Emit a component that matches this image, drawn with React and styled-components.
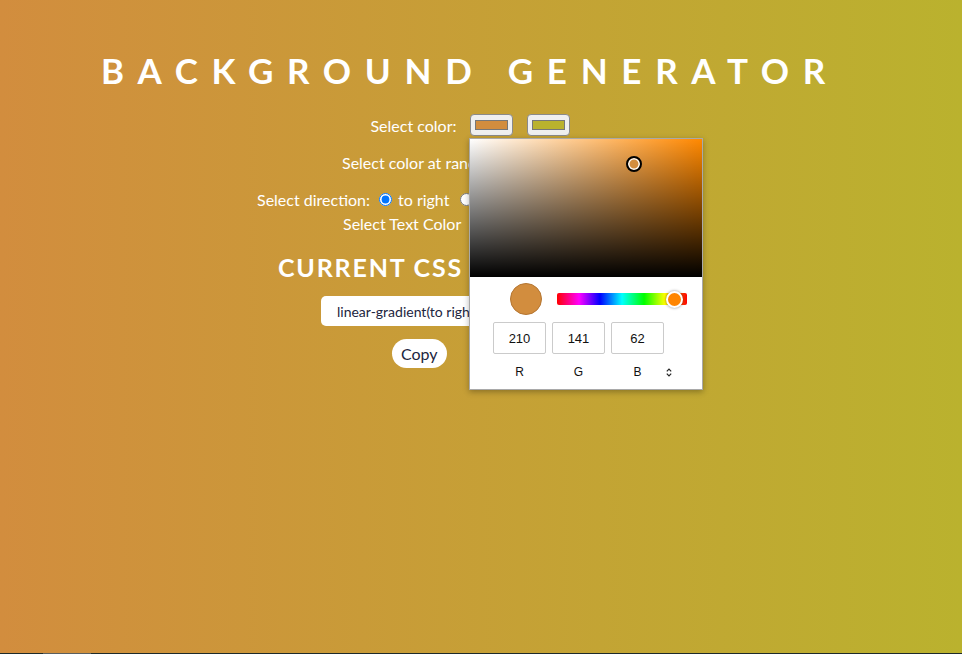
import React, { useState } from "react";
import styled, { createGlobalStyle } from "styled-components";

const GlobalStyle = createGlobalStyle`
  html, body {
    margin: 0;
    padding: 0;
    background: #1d2a2a;
  }
  body {
    font-family: "Lato", "Noto Sans", sans-serif;
  }
`;

const COLOR_ONE = "#d28d3e";
const COLOR_TWO = "#bab22e";

export default function App() {
  const [direction, setDirection] = useState("to right");
  const css = `linear-gradient(${direction}, rgb(210, 141, 62), rgb(186, 178, 46))`;

  return (
    <>
      <GlobalStyle />
      <Page $from={COLOR_ONE} $to={COLOR_TWO}>
        <Content>
          <Title>BACKGROUND GENERATOR</Title>

          <Row $top={23}>
            <Label>Select color:</Label>
            <Swatch $color={COLOR_ONE} />
            <Swatch $color={COLOR_TWO} />
          </Row>

          <Row $top={15} $width={256}>
            <Label>Select color at random:</Label>
            <SmallButton>Random</SmallButton>
          </Row>

          <Row $top={15} $width={426}>
            <Label>Select direction:</Label>
            {["to right", "to left", "to bottom", "to top"].map((d) => (
              <RadioLabel key={d}>
                <input
                  type="radio"
                  name="direction"
                  checked={direction === d}
                  onChange={() => setDirection(d)}
                />
                {d}
              </RadioLabel>
            ))}
          </Row>

          <Row $top={2} $width={254}>
            <Label>Select Text Color</Label>
            <Swatch $color="#ffffff" />
          </Row>

          <Heading>CURRENT CSS CODE</Heading>
          <CssBox readOnly value={css} />

          <Buttons>
            <PillButton>Copy</PillButton>
            <PillButton>Reset all</PillButton>
          </Buttons>
        </Content>

        <Picker>
          <Saturation $hue={32}>
            <SatHandle style={{ left: "70.5%", top: "18%" }} />
          </Saturation>
          <PickerBody>
            <PreviewRow>
              <Preview $color={COLOR_ONE} />
              <HueBar>
                <HueThumb style={{ left: "90.5%" }} />
              </HueBar>
            </PreviewRow>
            <Channels>
              <ChannelInput value="210" readOnly />
              <ChannelInput value="141" readOnly />
              <ChannelInput value="62" readOnly />
              <Spacer />
              <ChannelName>R</ChannelName>
              <ChannelName>G</ChannelName>
              <ChannelName>B</ChannelName>
              <ModeToggle>
                <svg width="6" height="9" viewBox="0 0 6 9">
                  <path d="M0.8 3.4 L3 1.2 L5.2 3.4 M0.8 5.6 L3 7.8 L5.2 5.6" fill="none" stroke="#222" strokeWidth="1.2" />
                </svg>
              </ModeToggle>
            </Channels>
          </PickerBody>
        </Picker>
      </Page>
      <ScrollTrack>
        <ScrollThumb />
      </ScrollTrack>
    </>
  );
}

const Page = styled.div`
  position: relative;
  height: 653px;
  background: linear-gradient(to right, ${(p) => p.$from}, ${(p) => p.$to});
  overflow: hidden;
`;

const Content = styled.div`
  width: 940px;
  padding-top: 49px;
  display: flex;
  flex-direction: column;
  align-items: center;
  color: #fff;
`;

const Title = styled.h1`
  margin: 0;
  font-size: 35px;
  line-height: 42px;
  font-weight: 700;
  letter-spacing: 13.7px;
  white-space: nowrap;
`;

const Row = styled.div`
  margin-top: ${(p) => p.$top}px;
  width: ${(p) => (p.$width ? `${p.$width}px` : "auto")};
  height: 22px;
  display: flex;
  align-items: center;
  gap: 13px;
  font-size: 16px;
`;

const Label = styled.span`
  white-space: nowrap;
`;

const Swatch = styled.span`
  box-sizing: border-box;
  flex: none;
  width: 43px;
  height: 22px;
  padding: 5px 4px;
  background: #efefef;
  border: 1px solid #8a8a8a;
  border-radius: 4px;
  display: flex;
  & + & {
    margin-left: 1px;
  }
  &::after {
    content: "";
    flex: 1;
    background: ${(p) => p.$color};
    border: 1px solid #777;
  }
`;

const SmallButton = styled.button`
  font-family: "Lato", sans-serif;
  font-size: 14px;
  padding: 2px 10px;
  border: none;
  border-radius: 10px;
  background: #fff;
`;

const RadioLabel = styled.label`
  display: flex;
  align-items: center;
  gap: 4px;
  margin-left: -4px;
  margin-right: 2px;
  white-space: nowrap;
  input {
    margin: 0 2px 0 0;
    width: 13px;
    height: 13px;
  }
`;

const Heading = styled.h2`
  margin: 18px 0 0;
  width: 384px;
  font-size: 25px;
  line-height: 30px;
  font-weight: 700;
  letter-spacing: 1.8px;
  white-space: nowrap;
`;

const CssBox = styled.input`
  box-sizing: border-box;
  margin-top: 14px;
  width: 298px;
  height: 30px;
  padding: 0 16px;
  border: none;
  border-radius: 5px;
  background: #fff;
  color: #1c2540;
  font-family: "Lato", sans-serif;
  font-size: 14px;
  outline: none;
`;

const Buttons = styled.div`
  margin-top: 13px;
  width: 156px;
  display: flex;
  gap: 22px;
`;

const PillButton = styled.button`
  flex: none;
  height: 29px;
  padding: 0 9px;
  border: none;
  border-radius: 15px;
  background: #fff;
  color: #1c2540;
  font-family: "Lato", sans-serif;
  font-size: 16px;
`;

const Picker = styled.div`
  position: absolute;
  left: 469px;
  top: 138px;
  box-sizing: border-box;
  width: 234px;
  height: 252px;
  background: #fff;
  border: 1px solid #a9a9a9;
  box-shadow: 0 2px 6px rgba(0, 0, 0, 0.3);
  display: flex;
  flex-direction: column;
  font-family: "Liberation Sans", Arial, sans-serif;
`;

const Saturation = styled.div`
  position: relative;
  height: 138px;
  background: linear-gradient(to top, #000, rgba(0, 0, 0, 0)),
    linear-gradient(to right, #fff, hsl(${(p) => p.$hue}, 100%, 50%));
`;

const SatHandle = styled.span`
  position: absolute;
  box-sizing: border-box;
  width: 16px;
  height: 16px;
  margin: -8px 0 0 -8px;
  border-radius: 50%;
  border: 2.5px solid #000;
  box-shadow: inset 0 0 0 1.5px #fff;
  background: ${COLOR_ONE};
`;

const PickerBody = styled.div`
  padding: 6px 0 0 23px;
`;

const PreviewRow = styled.div`
  display: flex;
  align-items: center;
  gap: 14px;
  padding-left: 17px;
`;

const Preview = styled.span`
  box-sizing: border-box;
  width: 32px;
  height: 32px;
  border-radius: 50%;
  background: ${(p) => p.$color};
  border: 1px solid #b57632;
`;

const HueBar = styled.div`
  position: relative;
  width: 130px;
  height: 12px;
  margin-left: 1px;
  border-radius: 2px;
  background: linear-gradient(
    to right,
    #f00 0%,
    #f0f 17%,
    #00f 33%,
    #0ff 50%,
    #0f0 67%,
    #ff0 83%,
    #f00 100%
  );
`;

const HueThumb = styled.span`
  position: absolute;
  top: 50%;
  box-sizing: border-box;
  width: 17px;
  height: 17px;
  margin: -8.5px 0 0 -8.5px;
  border-radius: 50%;
  background: #ff8500;
  border: 2px solid #fff;
  box-shadow: 0 0 3px rgba(0, 0, 0, 0.45);
`;

const Channels = styled.div`
  margin-top: 7px;
  display: grid;
  grid-template-columns: 53px 53px 53px 8px;
  column-gap: 6px;
  row-gap: 11px;
  align-items: center;
`;

const ChannelInput = styled.input`
  box-sizing: border-box;
  width: 53px;
  height: 32px;
  border: 1px solid #cbcbcb;
  border-radius: 2px;
  text-align: center;
  font-family: "Liberation Sans", Arial, sans-serif;
  font-size: 13px;
  color: #111;
  padding: 0;
  outline: none;
`;

const Spacer = styled.span``;

const ChannelName = styled.span`
  text-align: center;
  font-size: 12px;
  line-height: 14px;
  color: #111;
`;

const ModeToggle = styled.span`
  display: flex;
  justify-content: flex-start;
  margin-left: -4px;
  svg {
    display: block;
  }
`;

const ScrollTrack = styled.div`
  height: 1px;
  background: #1d2a2a;
  padding-left: 43px;
`;

const ScrollThumb = styled.div`
  width: 48px;
  height: 1px;
  background: #5a5f5f;
`;
